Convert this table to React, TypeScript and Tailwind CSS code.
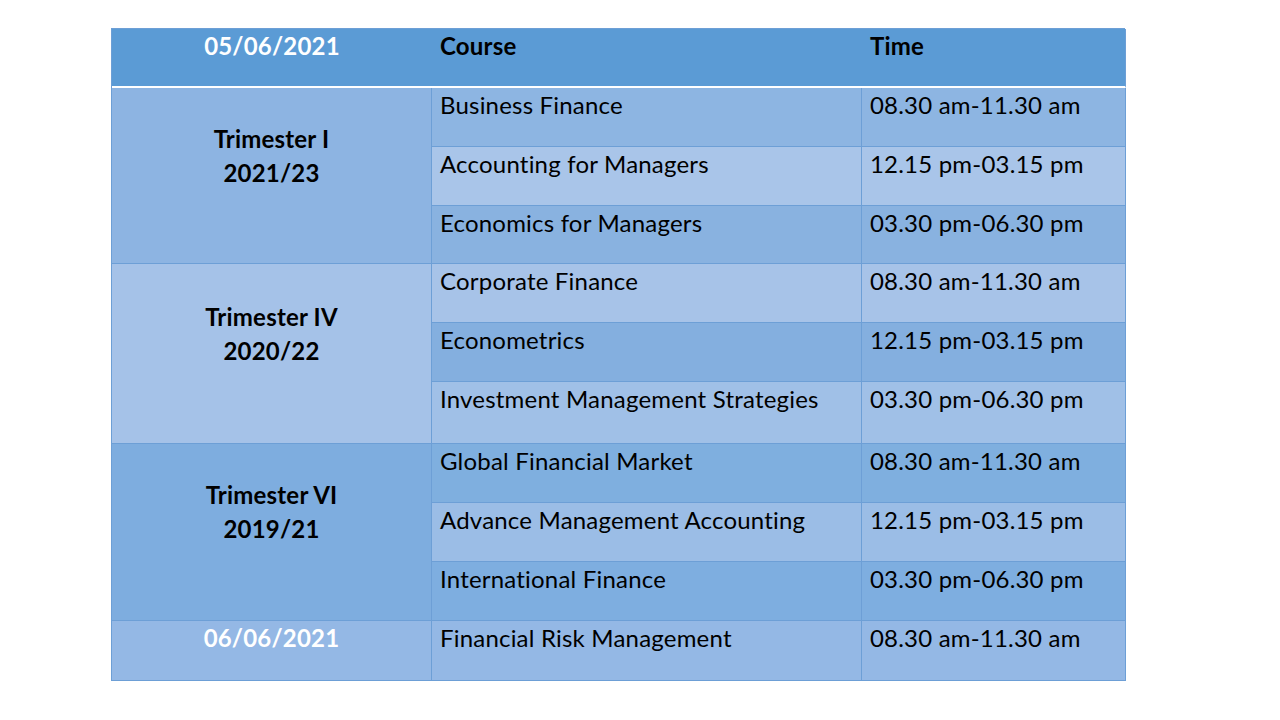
const rows = [
  { course: "Business Finance", time: "08.30 am-11.30 am", bg: "bg-[#8db5e2]" },
  { course: "Accounting for Managers", time: "12.15 pm-03.15 pm", bg: "bg-[#a9c5e9]" },
  { course: "Economics for Managers", time: "03.30 pm-06.30 pm", bg: "bg-[#89b2e0]" },
  { course: "Corporate Finance", time: "08.30 am-11.30 am", bg: "bg-[#a7c3e8]" },
  { course: "Econometrics", time: "12.15 pm-03.15 pm", bg: "bg-[#84afdf]" },
  { course: "Investment Management Strategies", time: "03.30 pm-06.30 pm", bg: "bg-[#a0c0e7]" },
  { course: "Global Financial Market", time: "08.30 am-11.30 am", bg: "bg-[#7fafdf]" },
  { course: "Advance Management Accounting", time: "12.15 pm-03.15 pm", bg: "bg-[#9bbde6]" },
  { course: "International Finance", time: "03.30 pm-06.30 pm", bg: "bg-[#7eaee0]" },
  { course: "Financial Risk Management", time: "08.30 am-11.30 am", bg: "bg-[#94b8e5]" },
];

const groups = [
  { title: "Trimester I", year: "2021/23", bg: "bg-[#8db4e2]", start: "row-start-2" },
  { title: "Trimester IV", year: "2020/22", bg: "bg-[#a5c2e8]", start: "row-start-5" },
  { title: "Trimester VI", year: "2019/21", bg: "bg-[#7eaddf]", start: "row-start-8" },
];

const cell = "border-[#6d9fd6] border-r border-b px-2 leading-[34px]";

export default function App() {
  return (
    <div
      className="w-[1280px] h-[720px] bg-white pt-[28px] pl-[111px] text-[24px] tracking-[0.2px] text-black"
      style={{ fontFamily: "Lato, 'Open Sans', sans-serif" }}
    >
      <div className="grid grid-cols-[320px_430px_264px] grid-rows-[59px_59px_59px_58px_59px_59px_62px_59px_59px_59px_60px] w-[1014px] border-l border-t border-[#6d9fd6]">
        {/* header */}
        <div className="bg-[#5b9bd5] border-b-2 border-white text-center font-bold text-white leading-[34px]">
          05/06/2021
        </div>
        <div className="bg-[#5b9bd5] border-b-2 border-white font-bold px-2 leading-[34px]">
          Course
        </div>
        <div className="bg-[#5b9bd5] border-b-2 border-white border-r border-r-[#6d9fd6] font-bold px-2 leading-[34px]">
          Time
        </div>

        {/* trimester groups */}
        {groups.map((g) => (
          <div
            key={g.title}
            className={`${g.bg} ${g.start} row-span-3 col-start-1 border-r border-b border-[#6d9fd6] flex flex-col items-center justify-center pb-[40px] font-bold leading-[34px]`}
          >
            <span>{g.title}</span>
            <span>{g.year}</span>
          </div>
        ))}

        <div className="row-start-11 col-start-1 bg-[#94b8e5] border-r border-b border-[#6d9fd6] text-center font-bold text-white leading-[34px]">
          06/06/2021
        </div>

        {rows.map((r, i) => (
          <div key={i} className="contents">
            <div className={`${r.bg} ${cell} col-start-2`} style={{ gridRowStart: i + 2 }}>
              {r.course}
            </div>
            <div className={`${r.bg} ${cell} col-start-3`} style={{ gridRowStart: i + 2 }}>
              {r.time}
            </div>
          </div>
        ))}
      </div>
    </div>
  );
}
